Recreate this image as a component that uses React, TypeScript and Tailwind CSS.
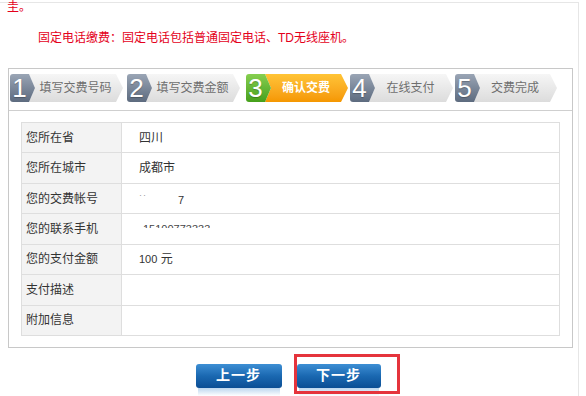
import React from "react";

type StepT = { n: string; label: string; w: string; m: string; active?: boolean };

const steps: StepT[] = [
  { n: "1", label: "填写交费号码", w: "w-[113px]", m: "ml-[1px]" },
  { n: "2", label: "填写交费金额", w: "w-[113px]", m: "ml-[4px]" },
  { n: "3", label: "确认交费", w: "w-[102px]", m: "ml-[6px]", active: true },
  { n: "4", label: "在线支付", w: "w-[103px]", m: "ml-[2px]" },
  { n: "5", label: "交费完成", w: "w-[102px]", m: "ml-[2px]" },
];

function Step({ s }: { s: StepT }) {
  return (
    <div className={`flex h-[28px] ${s.w} ${s.m}`}>
      <div
        className={`relative z-10 flex h-full w-[25px] shrink-0 rounded-l-[3px] pr-[6px] items-center justify-center [clip-path:polygon(0_0,calc(100%_-_6px)_0,100%_50%,calc(100%_-_6px)_100%,0_100%)] ${
          s.active
            ? "bg-gradient-to-b from-[#86cf4f] to-[#45a01a]"
            : "bg-gradient-to-b from-[#9aa5b5] to-[#5d6b7f]"
        }`}
      >
        <span className="font-['Liberation_Sans',sans-serif] text-[26px] leading-[28px] text-white [text-shadow:0_1px_1px_rgba(0,0,0,0.25)]">
          {s.n}
        </span>
      </div>
      <div
        className={`-ml-[6px] flex h-full flex-1 items-center justify-center pl-[6px] pr-[7px] [clip-path:polygon(0_0,calc(100%_-_7px)_0,100%_50%,calc(100%_-_7px)_100%,0_100%,6px_50%)] ${
          s.active
            ? "bg-gradient-to-b from-[#ffc436] to-[#f59700] text-white font-bold"
            : "bg-gradient-to-b from-[#f6f6f6] to-[#dcdcdc] text-[#6f6f6f]"
        }`}
      >
        <span className="text-[12px] leading-[12px] whitespace-nowrap">{s.label}</span>
      </div>
    </div>
  );
}

const rows: { k: string; v: React.ReactNode }[] = [
  { k: "您所在省", v: <span>四川</span> },
  { k: "您所在城市", v: <span>成都市</span> },
  {
    k: "您的交费帐号",
    v: (
      <span className="flex items-center">
        <span className="mb-[7px] text-[9px] leading-[9px] text-[#999] tracking-[1px]">··</span>
        <span className="ml-[31px] font-['Liberation_Sans',sans-serif] text-[11px] leading-[12px] mt-[2px]">7</span>
      </span>
    ),
  },
  {
    k: "您的联系手机",
    v: (
      <span className="mb-[6px] ml-[4px] block h-[4px] overflow-hidden font-['Liberation_Sans',sans-serif] text-[11px] leading-[12px] pt-0 text-[#444]">
        <span className="block -mt-[1px]">15100773333</span>
      </span>
    ),
  },
  {
    k: "您的支付金额",
    v: (
      <span>
        <span className="font-['Liberation_Sans',sans-serif] text-[11px]">100</span> 元
      </span>
    ),
  },
  { k: "支付描述", v: null },
  { k: "附加信息", v: null },
];

export default function App() {
  return (
    <div className="h-[396px] w-[586px] overflow-hidden bg-white pt-[2px] font-['Liberation_Sans','Noto_Sans_CJK_SC',sans-serif] text-[12px] text-[#333]">
      <div className="h-full w-[579px] border-r border-t border-[#e6e6e6]">
        <div className="-mt-[2px] pl-[7px] text-[12px] leading-[12px] text-[#e4001b]">圭。</div>
        <div className="mt-[19px] pl-[38px] text-[12px] leading-[12px] text-[#e4001b]">
          固定电话缴费：固定电话包括普通固定电话、TD无线座机。
        </div>

        <div className="ml-[8px] mt-[24px] w-[565px] border border-[#c8c8c8]">
          <div className="flex h-[42px] border-b border-[#cfcfcf] pt-[5px]">
            {steps.map((s) => (
              <Step key={s.n} s={s} />
            ))}
          </div>
          <div className="px-[12px] pb-[11px] pt-[11px]">
            <div className="border-l border-r border-t border-[#dedede]">
              {rows.map((r) => (
                <div key={r.k} className="flex h-[30.43px] border-b border-[#dedede]">
                  <div className="flex w-[100px] items-center border-r border-[#dedede] bg-[#f3f3f3] pl-[4px] text-[12px] text-[#333]">
                    {r.k}
                  </div>
                  <div className="flex flex-1 items-center pl-[17px] text-[12px] text-[#333]">{r.v}</div>
                </div>
              ))}
            </div>
          </div>
        </div>

        <div className="mt-[16px] flex justify-center gap-[15px] pr-[2px]">
          <div className="flex w-[86px] flex-col">
            <div className="flex h-[24px] items-center justify-center rounded-[3px] bg-gradient-to-b from-[#3d8fd4] via-[#1a68b1] to-[#0b4e94] text-[14px] font-bold tracking-[1px] text-white">
              上一步
            </div>
            <div className="mx-[2px] h-[8px] bg-gradient-to-b from-[#bcd6ee] to-white" />
          </div>
          <div className="relative flex w-[84px] flex-col">
            <div className="flex h-[24px] items-center justify-center rounded-[3px] bg-gradient-to-b from-[#3d8fd4] via-[#1a68b1] to-[#0b4e94] text-[14px] font-bold tracking-[1px] text-white">
              下一步
            </div>
            <div className="mx-[2px] h-[8px] bg-gradient-to-b from-[#bcd6ee] to-white" />
            <div className="absolute -left-[3px] -top-[10px] h-[40px] w-[106px] border-[3px] border-[#e5343c]" />
          </div>
        </div>
      </div>
    </div>
  );
}
